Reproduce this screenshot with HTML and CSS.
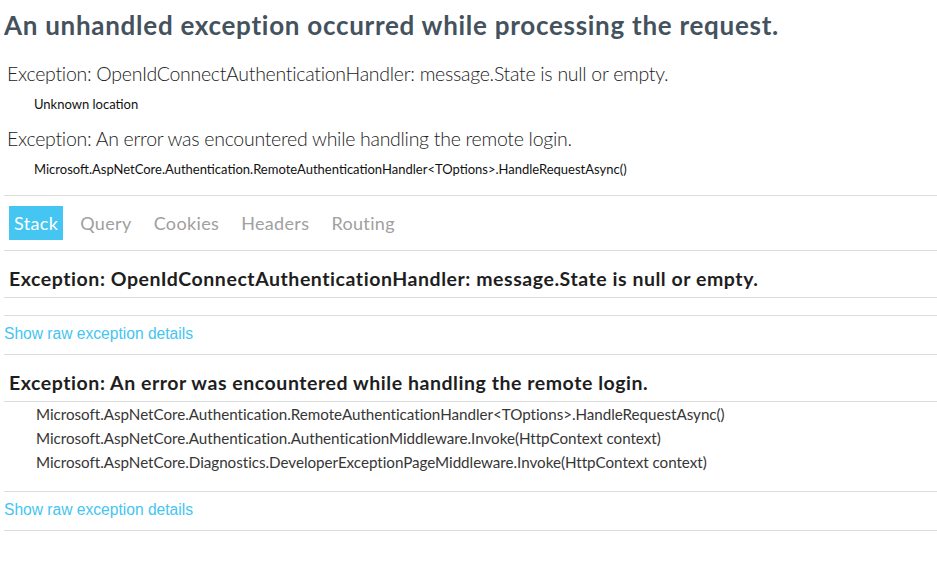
FILE: index.html
```html
<!DOCTYPE html>
<html lang="en">
<head>
<meta charset="utf-8">
<title>Internal Server Error</title>
<link rel="stylesheet" href="styles.css">
</head>
<body>
<h1 class="title">An unhandled exception occurred while processing the request.</h1>
<div class="titleerror">Exception: OpenIdConnectAuthenticationHandler: message.State is null or empty.</div>
<p class="location">Unknown location</p>
<div class="titleerror">Exception: An error was encountered while handling the remote login.</div>
<p class="location">Microsoft.AspNetCore.Authentication.RemoteAuthenticationHandler&lt;TOptions&gt;.HandleRequestAsync()</p>
<ul class="tabs">
  <li class="tab selected">Stack</li>
  <li class="tab">Query</li>
  <li class="tab">Cookies</li>
  <li class="tab">Headers</li>
  <li class="tab">Routing</li>
</ul>
<div class="stackpage">
  <section class="error-block">
    <h2 class="stackerror">Exception: OpenIdConnectAuthenticationHandler: message.State is null or empty.</h2>
    <div class="raw-block"><button class="show-raw" type="button">Show raw exception details</button></div>
  </section>
  <section class="error-block">
    <h2 class="stackerror">Exception: An error was encountered while handling the remote login.</h2>
    <ul class="frames">
      <li class="frame">Microsoft.AspNetCore.Authentication.RemoteAuthenticationHandler&lt;TOptions&gt;.HandleRequestAsync()</li>
      <li class="frame">Microsoft.AspNetCore.Authentication.AuthenticationMiddleware.Invoke(HttpContext context)</li>
      <li class="frame">Microsoft.AspNetCore.Diagnostics.DeveloperExceptionPageMiddleware.Invoke(HttpContext context)</li>
    </ul>
    <div class="raw-block"><button class="show-raw" type="button">Show raw exception details</button></div>
  </section>
</div>
</body>
</html>
```
FILE: styles.css
```css
html, body {
  background: #fff;
}

body {
  margin: 0 0 0 4px;
  font-family: Lato, "Open Sans", "Liberation Sans", sans-serif;
  font-size: 13px;
  color: #222;
}

.title {
  margin: 9px 0 16.5px 0;
  font-size: 26px;
  line-height: 32px;
  font-weight: 700;
  letter-spacing: 0.72px;
  color: #44525e;
}

.titleerror {
  padding: 3px 3px 6px 3px;
  font-size: 19.5px;
  line-height: 26px;
  font-weight: 300;
  letter-spacing: -0.28px;
  color: #222;
}

.location {
  margin: 3px 0 10px 30px;
  font-size: 13px;
  line-height: 17px;
  color: #111;
}

.tabs {
  display: flex;
  gap: 12px;
  list-style: none;
  margin: 17.5px 0 0 0;
  padding: 10px 0 10px 5px;
  border-top: 1px solid #ddd;
  border-bottom: 1px solid #ddd;
  font-size: 18px;
  line-height: 24px;
  letter-spacing: 0.35px;
}

.tab {
  padding: 5px;
  color: #a0a0a0;
}

.tab.selected {
  background: #44c5f2;
  color: #fff;
}

.stackpage {
  display: flex;
  flex-direction: column;
}

.error-block {
  display: flex;
  flex-direction: column;
}

.stackerror {
  margin: 10px 0 0 0;
  padding: 5px;
  border-bottom: 1px solid #ddd;
  font-size: 19.5px;
  line-height: 26px;
  font-weight: 700;
  letter-spacing: 0.55px;
  color: #1e1e1e;
}

.frames {
  list-style: none;
  margin: 0 0 0 30px;
  padding: 0;
}

.frame {
  padding: 2px;
  font-size: 15.2px;
  line-height: 20px;
  letter-spacing: -0.03px;
  color: #363636;
}

.raw-block {
  margin-top: 17px;
  padding-bottom: 3px;
  border-top: 1px solid #ddd;
  border-bottom: 1px solid #ddd;
}

.show-raw {
  display: block;
  border: 0;
  padding: 0;
  background: transparent;
  font-family: "Liberation Sans", Arial, sans-serif;
  font-size: 15.6px;
  line-height: 35px;
  color: #44c5f2;
  text-align: left;
  cursor: pointer;
}
```
